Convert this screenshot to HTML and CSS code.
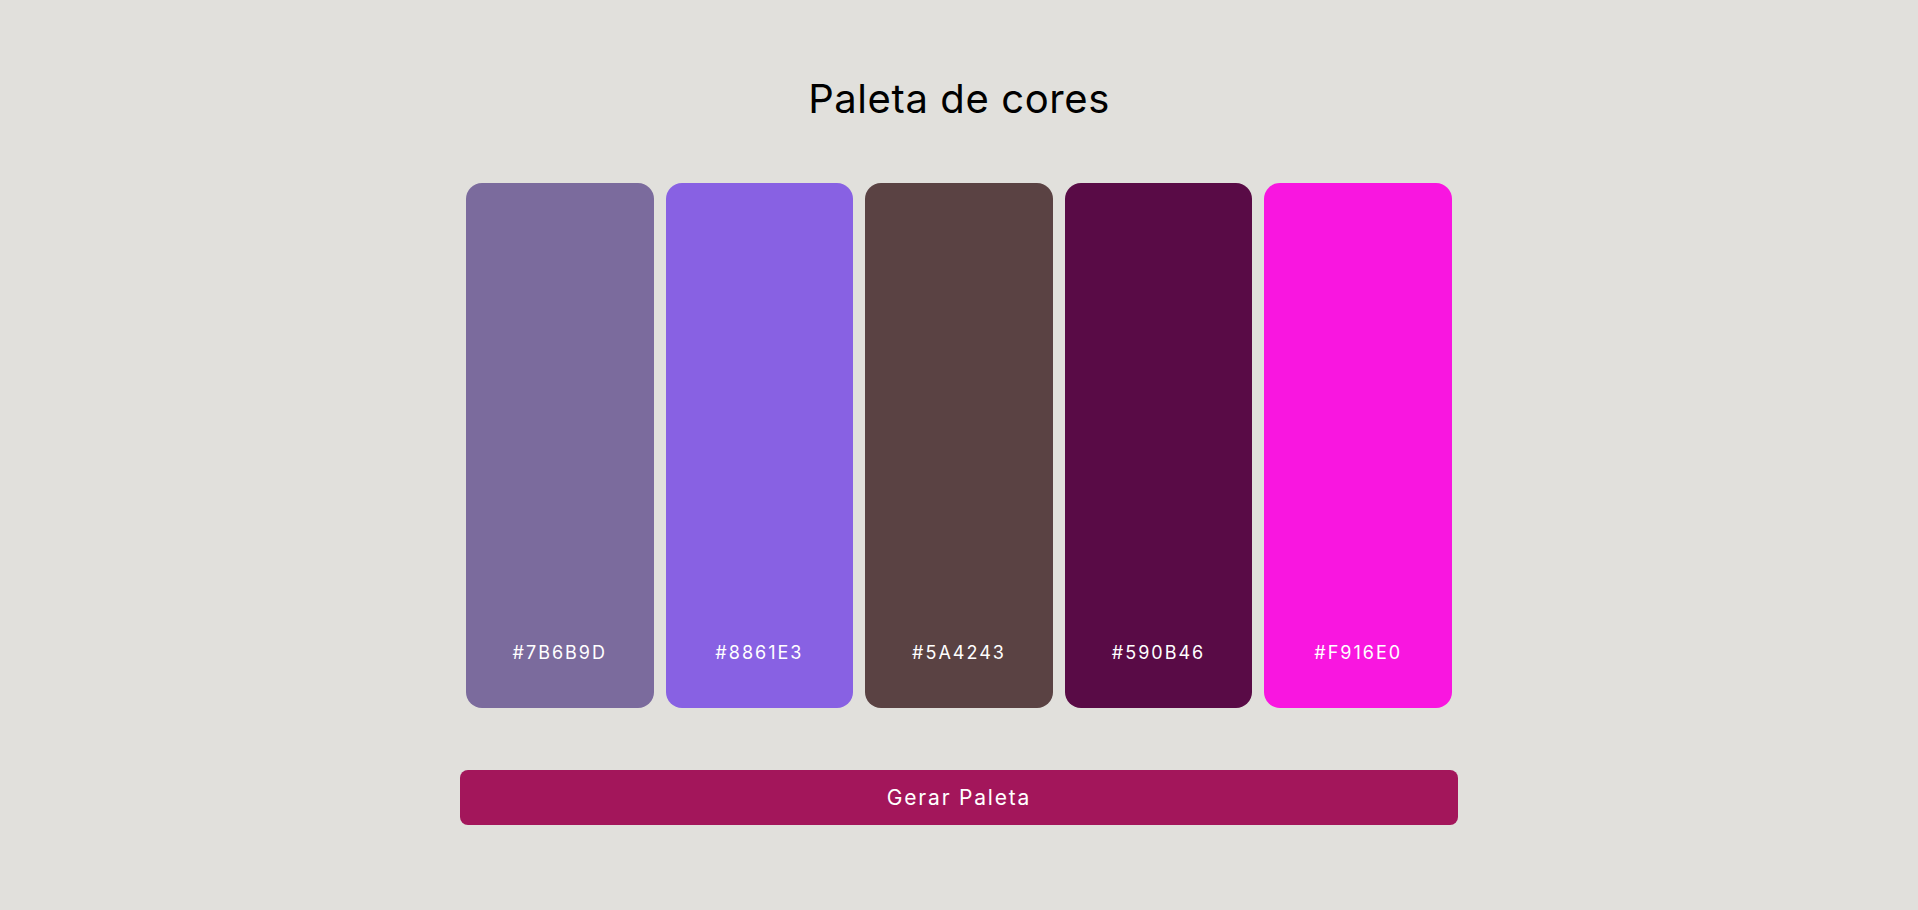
FILE: index.html
```html
<!DOCTYPE html>
<html lang="pt-BR">
<head>
<meta charset="utf-8">
<title>Paleta de cores</title>
<link rel="stylesheet" href="styles.css">
</head>
<body>
<main class="app">
  <h1 class="title">Paleta de cores</h1>
  <section class="palette">
    <div class="swatch" style="background:#7B6B9D"><span class="hex">#7B6B9D</span></div>
    <div class="swatch" style="background:#8861E3"><span class="hex">#8861E3</span></div>
    <div class="swatch" style="background:#5A4243"><span class="hex">#5A4243</span></div>
    <div class="swatch" style="background:#590B46"><span class="hex">#590B46</span></div>
    <div class="swatch" style="background:#F916E0"><span class="hex">#F916E0</span></div>
  </section>
  <button class="generate">Gerar Paleta</button>
</main>
</body>
</html>
```
FILE: styles.css
```css
html, body {
  margin: 0;
  padding: 0;
}
body {
  background: #e1e0dc;
  font-family: Inter, "Noto Sans", sans-serif;
  color: #000;
}
.app {
  width: 998px;
  margin: 0 auto;
  display: flex;
  flex-direction: column;
  align-items: center;
}
.title {
  margin: 74px 0 0;
  height: 50px;
  line-height: 50px;
  font-size: 40px;
  font-weight: 400;
  letter-spacing: 0.6px;
}
.palette {
  margin-top: 59px;
  width: 986px;
  display: flex;
  gap: 12px;
}
.swatch {
  flex: 1;
  height: 525px;
  border-radius: 16px;
  display: flex;
  align-items: flex-end;
  justify-content: center;
  padding-bottom: 44px;
  box-sizing: border-box;
}
.hex {
  color: #fff;
  font-size: 18px;
  line-height: 22px;
  letter-spacing: 2px;
}
.generate {
  margin-top: 62px;
  width: 998px;
  height: 55px;
  border: none;
  border-radius: 8px;
  background: #a3165b;
  color: #fff;
  font-family: Inter, "Noto Sans", sans-serif;
  font-size: 21px;
  letter-spacing: 1.8px;
  cursor: pointer;
}
```
